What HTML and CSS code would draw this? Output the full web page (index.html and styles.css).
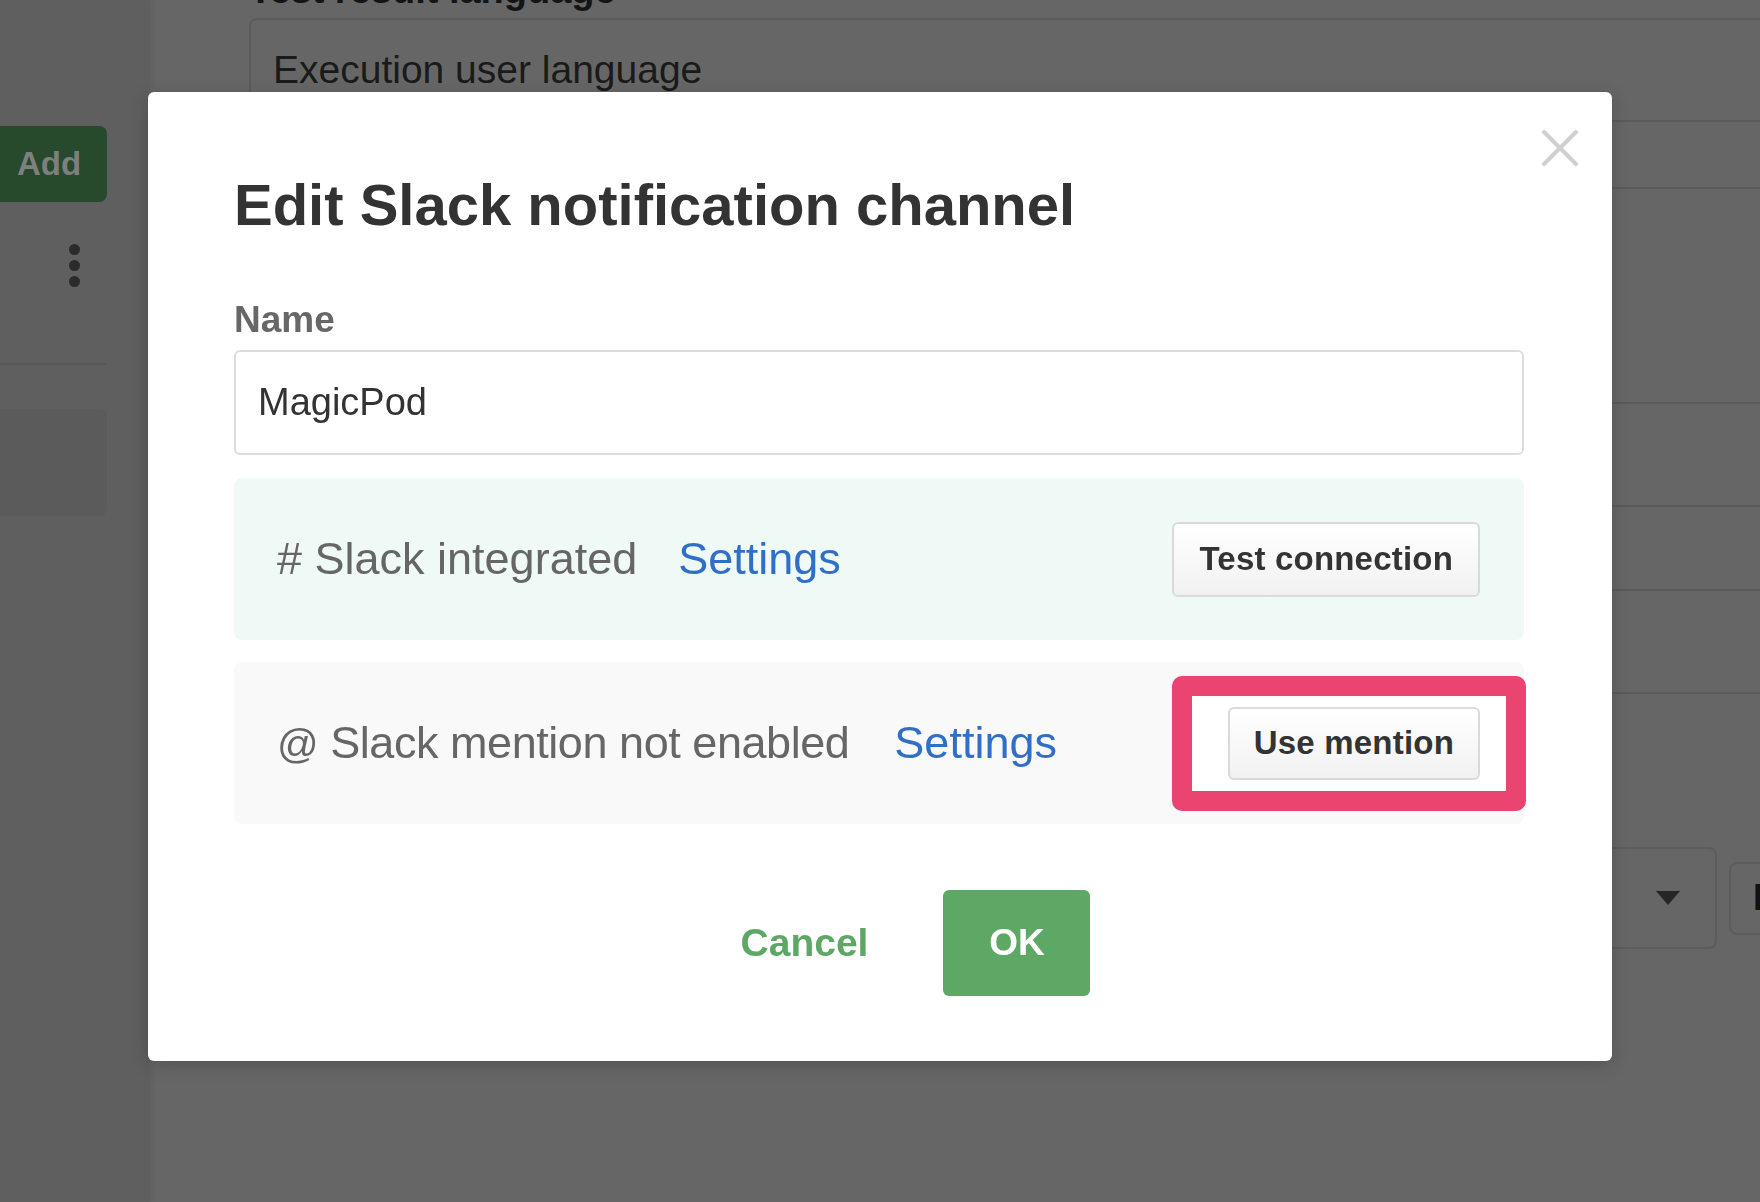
FILE: index.html
```html
<!DOCTYPE html>
<html lang="en">
<head>
<meta charset="utf-8">
<title>Edit Slack notification channel</title>
<link rel="stylesheet" href="styles.css">
</head>
<body>
<div class="app">
  <aside class="sidebar">
    <button class="add-btn" type="button">Add</button>
    <div class="kebab"><span></span><span></span><span></span></div>
    <div class="side-sep"></div>
    <div class="side-card"></div>
  </aside>
  <main class="main">
    <div class="field-label">Test result language</div>
    <div class="field-box">Execution user language</div>
    <div class="bg-row row-a"></div>
    <div class="bg-row row-b"></div>
    <div class="bg-row row-c"></div>
    <div class="bg-row row-d"></div>
    <div class="bg-row row-e"></div>
    <div class="select-row">
      <div class="select-box"><span class="caret"></span></div>
      <div class="small-box">B</div>
    </div>
  </main>
</div>

<div class="backdrop">
  <div class="modal">
    <button class="close-btn" type="button" aria-label="Close">
      <svg width="38" height="38" viewBox="0 0 38 38"><path d="M3 3 L35 35 M35 3 L3 35" stroke="#d0d0d0" stroke-width="4" stroke-linecap="round" fill="none"/></svg>
    </button>
    <h2 class="modal-title">Edit Slack notification channel</h2>
    <label class="field-name" for="name">Name</label>
    <input id="name" class="name-input" type="text" value="MagicPod">

    <div class="status-box integrated">
      <span class="status-text"># Slack integrated</span>
      <a class="status-link" href="#">Settings</a>
      <button class="plain-btn" type="button">Test connection</button>
    </div>

    <div class="status-box mention">
      <span class="status-text tight"><span class="at-sign">@</span> Slack mention not enabled</span>
      <a class="status-link wide" href="#">Settings</a>
      <span class="highlight-wrap">
        <span class="annotation"></span>
        <button class="plain-btn mention-btn" type="button">Use mention</button>
      </span>
    </div>

    <div class="modal-footer">
      <button class="cancel-btn" type="button">Cancel</button>
      <button class="ok-btn" type="button">OK</button>
    </div>
  </div>
</div>
</body>
</html>
```

FILE: styles.css
```css
html, body {
  margin: 0;
  padding: 0;
}

body {
  width: 1760px;
  height: 1202px;
  overflow: hidden;
  background: #666666;
  font-family: "Liberation Sans", Arial, sans-serif;
}

.app {
  display: flex;
  width: 1760px;
  height: 1202px;
  overflow: hidden;
}

/* ---------- dimmed sidebar ---------- */
.sidebar {
  width: 150px;
  flex: none;
  background: #5f5f5f;
  padding-top: 126px;
  box-sizing: border-box;
  display: flex;
  flex-direction: column;
  position: relative;
  z-index: 1;
  box-shadow: 2px 0 5px rgba(0, 0, 0, 0.06);
}

.add-btn {
  width: 107px;
  height: 76px;
  border: none;
  border-radius: 0 8px 8px 0;
  background: #264a2b;
  color: #7f7f7f;
  font-family: "Liberation Sans", Arial, sans-serif;
  font-weight: bold;
  font-size: 33px;
  text-align: left;
  padding: 0 0 0 17px;
}

.kebab {
  margin: 42px 0 0 69px;
  display: flex;
  flex-direction: column;
  gap: 5px;
}

.kebab span {
  width: 11px;
  height: 11px;
  border-radius: 50%;
  background: #2b2b2b;
}

.side-sep {
  width: 107px;
  height: 2px;
  background: #585858;
  margin-top: 76px;
}

.side-card {
  width: 107px;
  height: 107px;
  margin-top: 44px;
  background: #5b5b5b;
  border-radius: 0 8px 8px 0;
}

/* ---------- dimmed main content ---------- */
.main {
  flex: 1;
  min-width: 0;
  background: #666666;
  padding-left: 99px;
  display: flex;
  flex-direction: column;
  overflow: hidden;
}

.field-label {
  margin-top: -33px;
  font-size: 38px;
  line-height: 46px;
  font-weight: bold;
  color: #141414;
}

.field-box {
  margin-top: 5px;
  margin-right: -40px;
  height: 104px;
  box-sizing: border-box;
  border: 2px solid #5b5b5b;
  border-radius: 8px;
  padding-left: 22px;
  display: flex;
  align-items: center;
  font-size: 39px;
  color: #1a1a1a;
}

.bg-row {
  margin-right: -40px;
  box-sizing: border-box;
  border-bottom: 2px solid #5a5a5a;
}

.row-a { height: 67px; }
.row-b { height: 215px; }
.row-c { height: 103px; }
.row-d { height: 84px; }
.row-e { height: 103px; }

.select-row {
  margin-top: 153px;
  display: flex;
  justify-content: flex-end;
  align-items: center;
  gap: 12px;
}

.select-box {
  width: 420px;
  height: 102px;
  box-sizing: border-box;
  border: 2px solid #5c5c5c;
  border-radius: 8px;
  display: flex;
  align-items: center;
  justify-content: flex-end;
  padding-right: 35px;
}

.caret {
  width: 0;
  height: 0;
  border-left: 12px solid transparent;
  border-right: 12px solid transparent;
  border-top: 14px solid #262626;
}

.small-box {
  width: 80px;
  height: 73px;
  box-sizing: border-box;
  margin-right: -49px;
  border: 2px solid #5c5c5c;
  border-radius: 8px;
  padding-left: 22px;
  display: flex;
  align-items: center;
  font-size: 36px;
  font-weight: bold;
  color: #111;
}

/* ---------- modal ---------- */
.backdrop {
  position: fixed;
  inset: 0;
  display: flex;
  justify-content: center;
  align-items: flex-start;
  padding-top: 92px;
  box-sizing: border-box;
  z-index: 10;
}

.modal {
  position: relative;
  width: 1464px;
  box-sizing: border-box;
  background: #ffffff;
  border-radius: 6px;
  padding: 78px 88px 65px 86px;
  display: flex;
  flex-direction: column;
  box-shadow: 0 4px 18px rgba(0, 0, 0, 0.18);
}

.close-btn {
  position: absolute;
  top: 37px;
  right: 33px;
  width: 38px;
  height: 38px;
  padding: 0;
  border: none;
  background: none;
  display: block;
}

.close-btn svg {
  display: block;
}

.modal-title {
  margin: 0;
  font-size: 58px;
  line-height: 70px;
  font-weight: bold;
  color: #333333;
}

.field-name {
  margin-top: 58px;
  font-size: 37px;
  line-height: 44px;
  font-weight: bold;
  color: #676767;
}

.name-input {
  margin: 8px 0 0;
  width: 100%;
  height: 105px;
  box-sizing: border-box;
  border: 2px solid #dddddd;
  border-radius: 6px;
  padding: 0 22px;
  font-family: "Liberation Sans", Arial, sans-serif;
  font-size: 38px;
  color: #333333;
  background: #fff;
  outline: none;
}

.status-box {
  height: 162px;
  box-sizing: border-box;
  border-radius: 8px;
  padding: 0 44px 0 43px;
  display: flex;
  align-items: center;
}

.status-box.integrated {
  margin-top: 23px;
  background: #eff9f5;
}

.status-box.mention {
  margin-top: 22px;
  background: #f9f9f9;
}

.status-text {
  font-size: 45px;
  line-height: 54px;
  color: #666666;
}

.status-text.tight {
  letter-spacing: -0.45px;
}

.at-sign {
  font-size: 41px;
}

.status-link {
  margin-left: 41px;
  font-size: 45px;
  line-height: 54px;
  color: #2f6fc7;
  text-decoration: none;
}

.status-link.wide {
  margin-left: 45px;
}

.plain-btn {
  margin-left: auto;
  height: 75px;
  box-sizing: border-box;
  padding: 0 25px;
  border: 2px solid #dadada;
  border-radius: 6px;
  background: linear-gradient(#ffffff, #f1f1f1);
  font-family: "Liberation Sans", Arial, sans-serif;
  font-size: 33px;
  font-weight: bold;
  color: #333333;
  letter-spacing: 0.2px;
}

.highlight-wrap {
  margin-left: auto;
  position: relative;
  display: flex;
}

.annotation {
  position: absolute;
  top: -31px;
  bottom: -31px;
  left: -56px;
  right: -46px;
  border: 20px solid #ea4571;
  border-radius: 10px;
  background: #ffffff;
  z-index: 0;
}

.mention-btn {
  position: relative;
  z-index: 1;
  margin-left: 0;
  height: 73px;
  padding: 0 24px;
}

.modal-footer {
  margin-top: 66px;
  padding-left: 35px;
  display: flex;
  justify-content: center;
  align-items: center;
}

.cancel-btn {
  height: 106px;
  padding: 0 38px;
  border: none;
  background: none;
  font-family: "Liberation Sans", Arial, sans-serif;
  font-size: 39px;
  font-weight: bold;
  color: #5ea865;
}

.ok-btn {
  margin-left: 37px;
  width: 147px;
  height: 106px;
  border: none;
  border-radius: 6px;
  background: #5ea865;
  color: #ffffff;
  font-family: "Liberation Sans", Arial, sans-serif;
  font-size: 37px;
  font-weight: bold;
}
```
